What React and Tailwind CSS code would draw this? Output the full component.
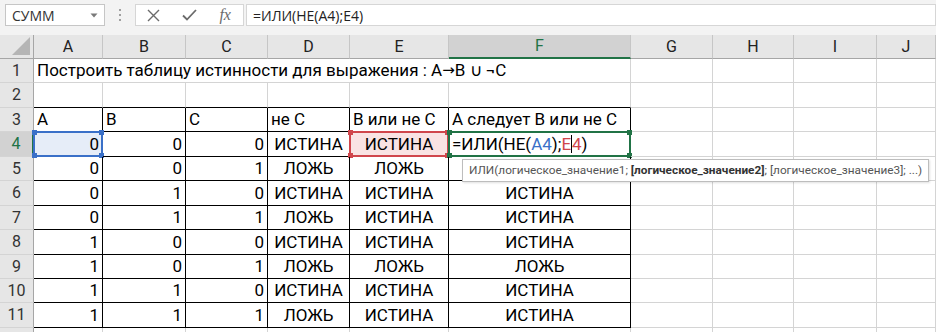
import React from "react";

const cellFont = { fontFamily: "Roboto, 'Noto Sans', sans-serif" };

const data = [
  [0, 0, 0, "ИСТИНА", "ИСТИНА", null],
  [0, 0, 1, "ЛОЖЬ", "ЛОЖЬ", ""],
  [0, 1, 0, "ИСТИНА", "ИСТИНА", "ИСТИНА"],
  [0, 1, 1, "ЛОЖЬ", "ИСТИНА", "ИСТИНА"],
  [1, 0, 0, "ИСТИНА", "ИСТИНА", "ИСТИНА"],
  [1, 0, 1, "ЛОЖЬ", "ЛОЖЬ", "ЛОЖЬ"],
  [1, 1, 0, "ИСТИНА", "ИСТИНА", "ИСТИНА"],
  [1, 1, 1, "ЛОЖЬ", "ИСТИНА", "ИСТИНА"],
];

const cols = ["A", "B", "C", "D", "E", "F", "G", "H", "I", "J"];

function Handles({ color }) {
  return (
    <>
      <span className={`absolute -left-[3px] -top-[3px] h-[5px] w-[5px] ${color}`} />
      <span className={`absolute -right-[3px] -top-[3px] h-[5px] w-[5px] ${color}`} />
      <span className={`absolute -left-[3px] -bottom-[3px] h-[5px] w-[5px] ${color}`} />
      <span className={`absolute -right-[3px] -bottom-[3px] h-[5px] w-[5px] ${color}`} />
    </>
  );
}

function RowHeader({ n, selected }) {
  return (
    <div
      className={`flex items-center justify-center border-b border-[#d4d4d4] text-[16px] ${
        selected
          ? "bg-[#d2d2d2] text-[#217346] border-r-2 border-r-[#217346]"
          : "bg-[#e6e6e6] text-[#333] border-r border-r-[#a6a6a6]"
      }`}
      style={cellFont}
    >
      {n}
    </div>
  );
}

function Cell({ children, align = "left", table, topBlack, extra = "" }) {
  const rb = table ? "border-r-[#000]" : "border-r-[#d4d4d4]";
  const bb = table || topBlack ? "border-b-[#000]" : "border-b-[#d4d4d4]";
  const al =
    align === "right" ? "justify-end pr-[3px]" : align === "center" ? "justify-center" : "justify-start pl-[3px]";
  return (
    <div
      className={`relative flex items-end pb-[2px] border-r border-b ${rb} ${bb} ${al} text-[17px] leading-[20px] text-black whitespace-nowrap ${extra}`}
      style={cellFont}
    >
      {children}
    </div>
  );
}

export default function App() {
  return (
    <div className="w-[936px] h-[332px] overflow-hidden bg-white">
      {/* toolbar */}
      <div className="h-[35px] bg-[#f3f3f3] flex items-start pt-[4px]">
        <div className="ml-[5px] w-[100px] h-[22px] bg-white border border-[#c6c6c6] flex items-center justify-between pl-[6px] pr-[6px]">
          <span className="text-[14px] text-[#333]" style={{ fontFamily: "'Open Sans', sans-serif" }}>
            СУММ
          </span>
          <svg width="8" height="5" viewBox="0 0 8 5">
            <path d="M0.5 0.5 L7.5 0.5 L4 4.5 Z" fill="#7a7a7a" />
          </svg>
        </div>
        <div className="w-[30px] h-[22px] flex flex-col items-center justify-center gap-[3px]">
          <span className="w-[2px] h-[2px] bg-[#a0a0a0]" />
          <span className="w-[2px] h-[2px] bg-[#a0a0a0]" />
          <span className="w-[2px] h-[2px] bg-[#a0a0a0]" />
        </div>
        <div className="w-[109px] h-[22px] bg-white border border-[#d6d6d6] flex items-center">
          <div className="w-[36px] flex justify-center">
            <svg width="13" height="13" viewBox="0 0 13 13">
              <path d="M1 1 L12 12 M12 1 L1 12" stroke="#6b6b6b" strokeWidth="1.4" />
            </svg>
          </div>
          <div className="w-[36px] flex justify-center">
            <svg width="15" height="12" viewBox="0 0 15 12">
              <path d="M1 6.5 L5 10.5 L14 1" stroke="#6b6b6b" strokeWidth="1.8" fill="none" />
            </svg>
          </div>
          <div className="w-[36px] flex justify-center">
            <span
              className="text-[16px] italic text-[#6b6b6b] leading-none"
              style={{ fontFamily: "'Liberation Serif', serif" }}
            >
              fx
            </span>
          </div>
        </div>
        <div className="ml-[2px] flex-1 h-[22px] bg-white border border-[#d6d6d6] flex items-center pl-[6px]">
          <span className="text-[14px] text-[#222]" style={{ fontFamily: "'Open Sans', sans-serif" }}>
            =ИЛИ(НЕ(A4);E4)
          </span>
        </div>
      </div>

      {/* sheet */}
      <div className="relative grid grid-cols-[34px_69px_83px_82px_82px_99px_182px_82px_81px_83px_1fr] grid-rows-[24px_24px_25px_24px_25px_24px_25px_24px_25px_24px_24px_25px_20px]">
        {/* corner */}
        <div className="bg-[#e6e6e6] border-r border-b border-[#a6a6a6] flex items-end justify-end pr-[3px] pb-[3px]">
          <svg width="18" height="18" viewBox="0 0 18 18">
            <path d="M18 0 L18 18 L0 18 Z" fill="#b5b5b5" />
          </svg>
        </div>
        {cols.map((c) => (
          <div
            key={c}
            className={`flex items-center justify-center text-[16px] ${
              c === "F"
                ? "bg-[#d2d2d2] text-[#217346] border-b-2 border-b-[#217346] border-r border-r-[#c6c6c6]"
                : "bg-[#e6e6e6] text-[#222] border-b border-b-[#a6a6a6] border-r border-r-[#c6c6c6]"
            }`}
            style={cellFont}
          >
            {c}
          </div>
        ))}

        {/* row 1 */}
        <RowHeader n={1} />
        <div
          className="col-span-6 flex items-end pb-[2px] pl-[3px] border-r border-b border-[#d4d4d4] text-[17px] leading-[20px] whitespace-nowrap"
          style={cellFont}
        >
          Построить таблицу истинности для выражения : A
          <span style={{ fontFamily: "'DejaVu Sans', sans-serif" }} className="text-[15px]">→</span>
          B ∪ ¬C
        </div>
        <Cell />
        <Cell />
        <Cell />
        <Cell />

        {/* row 2 */}
        <RowHeader n={2} />
        {cols.map((c, i) => (
          <Cell key={c} topBlack={i < 6} />
        ))}

        {/* row 3 */}
        <RowHeader n={3} />
        <Cell table>A</Cell>
        <Cell table>B</Cell>
        <Cell table>C</Cell>
        <Cell table>не С</Cell>
        <Cell table>B или не С</Cell>
        <Cell table>A следует B или не С</Cell>
        <Cell />
        <Cell />
        <Cell />
        <Cell />

        {data.map((r, idx) => {
          const n = idx + 4;
          const sel = n === 4;
          return (
            <React.Fragment key={n}>
              <RowHeader n={n} selected={sel} />
              <Cell table align="right" extra={sel ? "bg-[#e6edf8]" : ""}>
                {r[0]}
                {sel && (
                  <span className="absolute -left-px -top-px -right-px -bottom-px border-2 border-[#3a70c8]">
                    <Handles color="bg-[#3a70c8]" />
                  </span>
                )}
              </Cell>
              <Cell table align="right">{r[1]}</Cell>
              <Cell table align="right">{r[2]}</Cell>
              <Cell table align="center">{r[3]}</Cell>
              <Cell table align="center" extra={sel ? "bg-[#f9e3e3]" : ""}>
                {r[4]}
                {sel && (
                  <span className="absolute -left-px -top-px -right-px -bottom-px border-2 border-[#d0464c]">
                    <Handles color="bg-[#d0464c]" />
                  </span>
                )}
              </Cell>
              {sel ? (
                <Cell table align="left">
                  <span>
                    =ИЛИ(НЕ(<span className="text-[#3a70c8]">A4</span>);
                    <span className="text-[#d0464c]">E</span>
                    <span className="inline-block w-px h-[18px] bg-black align-[-3px]" />
                    <span className="text-[#d0464c]">4</span>)
                  </span>
                  <span className="absolute -left-px -top-px -right-px -bottom-px border-2 border-[#217346]">
                    <Handles color="bg-[#217346]" />
                  </span>
                </Cell>
              ) : (
                <Cell table align="center">{r[5]}</Cell>
              )}
              <Cell />
              <Cell />
              <Cell />
              <Cell />
            </React.Fragment>
          );
        })}

        {/* row 12 partial */}
        <div className="bg-[#e6e6e6] border-r border-r-[#a6a6a6]" />
        {cols.map((c) => (
          <Cell key={c} />
        ))}

        {/* tooltip */}
        <div
          className="absolute left-[462px] top-[124px] h-[23px] px-[6px] flex items-center bg-white border border-[#bdbdbd] shadow-[1px_1px_2px_rgba(0,0,0,0.12)] text-[11.8px] text-[#555] whitespace-nowrap"
          style={{ fontFamily: "Roboto, sans-serif" }}
        >
          ИЛИ(логическое_значение1;&nbsp;
          <span className="font-bold text-[#333]">[логическое_значение2]</span>
          ; [логическое_значение3]; ...)
        </div>
      </div>
    </div>
  );
}
